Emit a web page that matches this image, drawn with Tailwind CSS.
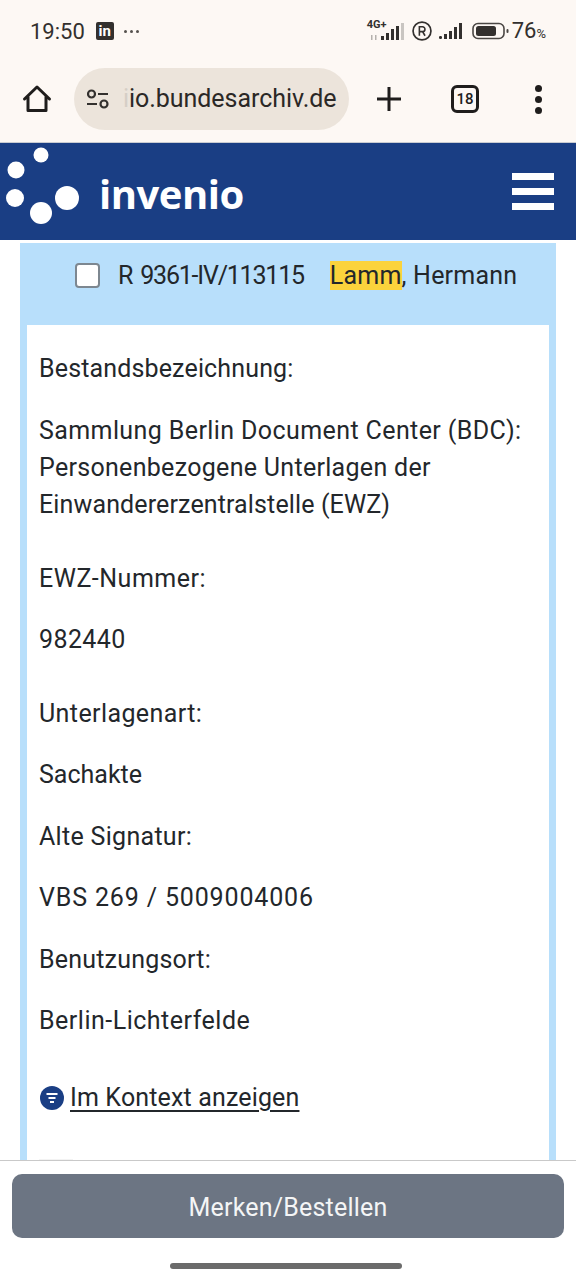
<!DOCTYPE html>
<html lang="de">
<head>
  <meta charset="UTF-8" />
  <meta name="viewport" content="width=device-width, initial-scale=1.0"/>
  <title>invenio</title>
  <script src="https://cdn.jsdelivr.net/npm/@tailwindcss/browser@4"></script>
</head>
<body class="bg-white font-['Roboto',sans-serif] text-[#23272b]">
<div class="w-[576px] h-[1280px] overflow-hidden flex flex-col">

  <!-- Status bar + browser toolbar -->
  <div class="bg-[#fdf8f4] h-[142px] shrink-0">
    <div class="h-[62px] flex items-center pl-[30px] pr-[30px]">
      <span class="text-[22px] text-[#33302e]">19:50</span>
      <span class="ml-[11px] w-[18px] h-[18px] bg-[#33302e] rounded-[2px] text-white text-[15px] font-bold leading-[19px] text-center">in</span>
      <span class="ml-[10px] flex gap-[3px]">
        <i class="w-[3px] h-[3px] rounded-full bg-[#55514e]"></i>
        <i class="w-[3px] h-[3px] rounded-full bg-[#55514e]"></i>
        <i class="w-[3px] h-[3px] rounded-full bg-[#55514e]"></i>
      </span>
      <div class="ml-auto flex items-center">
        <div class="relative w-[37px] h-[24px]">
          <span class="absolute left-0 top-[-1px] text-[11px] font-bold text-[#33302e] leading-[14px]">4G+</span>
          <svg class="absolute left-0 top-0" width="37" height="24" viewBox="0 0 37 24">
            <rect x="14" y="17" width="3" height="4" fill="#33302e"/>
            <rect x="19" y="14" width="3" height="7" fill="#33302e"/>
            <rect x="24" y="10" width="3" height="11" fill="#33302e"/>
            <rect x="29" y="7" width="3" height="14" fill="#33302e"/>
            <rect x="34" y="4" width="3" height="17" fill="#c9c5c1"/>
            <rect x="4" y="16" width="1.5" height="5" fill="#b5b1ad"/>
            <rect x="8" y="16" width="1.5" height="5" fill="#b5b1ad"/>
          </svg>
        </div>
        <svg class="ml-[8px]" width="20" height="20" viewBox="0 0 19 19">
          <circle cx="9.5" cy="9.5" r="8.5" fill="none" stroke="#33302e" stroke-width="1.6"/>
          <path d="M7 14V5.5h3a2.3 2.3 0 0 1 0 4.6H7M10 10l2.4 4" fill="none" stroke="#33302e" stroke-width="1.5"/>
        </svg>
        <svg class="ml-[7px]" width="25" height="18" viewBox="0 0 25 18">
          <rect x="0" y="14" width="3" height="3" rx="1.2" fill="#33302e"/>
          <rect x="5" y="12" width="3" height="5" fill="#33302e"/>
          <rect x="10" y="9" width="3" height="8" fill="#33302e"/>
          <rect x="15" y="5" width="3" height="12" fill="#33302e"/>
          <rect x="20" y="1" width="3" height="16" fill="#33302e"/>
        </svg>
        <svg class="ml-[8px]" width="37" height="18" viewBox="0 0 37 18">
          <rect x="1" y="1.5" width="31" height="15" rx="5" fill="none" stroke="#4a4643" stroke-width="1.6"/>
          <rect x="4" y="4" width="20" height="10" rx="2.5" fill="#33302e"/>
          <rect x="34.5" y="7" width="2" height="4" rx="1" fill="#4a4643"/>
        </svg>
        <span class="ml-[3px] text-[22px] text-[#33302e] leading-none">76<span class="text-[13px]">%</span></span>
      </div>
    </div>
    <div class="h-[74px] flex items-center">
      <svg class="ml-[22px]" width="30" height="30" viewBox="0 0 30 30">
        <path d="M2.5 15 15 3l12.5 12M6 12.5V26.500h18V12.500" fill="none" stroke="#1f1d1c" stroke-width="3" stroke-linejoin="round" stroke-linecap="round"/>
      </svg>
      <div class="ml-[22px] w-[275px] h-[62px] rounded-full bg-[#ece4db] flex items-center overflow-hidden">
        <svg class="ml-[12px] shrink-0" width="24" height="20" viewBox="0 0 24 20">
          <circle cx="5.500" cy="5" r="3.500" fill="none" stroke="#33302e" stroke-width="2.200"/>
          <path d="M12 5h10M1 15h10" stroke="#33302e" stroke-width="2.200"/>
          <circle cx="18" cy="15" r="3.500" fill="none" stroke="#33302e" stroke-width="2.200"/>
        </svg>
        <span class="ml-[13px] text-[25px] whitespace-nowrap text-[#2b2826] tracking-[-0.05px]"><span class="text-[#d5cec6]">i</span>io.bundesarchiv.de</span>
      </div>
      <svg class="ml-[27px]" width="26" height="26" viewBox="0 0 26 26">
        <path d="M13 1v24M1 13h24" stroke="#1f1d1c" stroke-width="3"/>
      </svg>
      <div class="ml-[49px] w-[28px] h-[28px] rounded-[6px] border-[3px] border-[#1f1d1c] text-[15px] font-medium leading-[22px] text-center text-[#1f1d1c]">18</div>
      <div class="ml-[56px] flex flex-col gap-[4px]">
        <i class="w-[7px] h-[7px] rounded-full bg-[#1f1d1c]"></i>
        <i class="w-[7px] h-[7px] rounded-full bg-[#1f1d1c]"></i>
        <i class="w-[7px] h-[7px] rounded-full bg-[#1f1d1c]"></i>
      </div>
    </div>
  </div>

  <!-- invenio header -->
  <header class="h-[98px] shrink-0 bg-[#1a3e84] border-t border-[#c9ccd2] flex items-center relative">
    <svg class="absolute left-0 top-0" width="90" height="90" viewBox="0 0 90 90">
      <circle cx="41" cy="12" r="7.500" fill="#fff"/>
      <circle cx="16" cy="27" r="8.500" fill="#fff"/>
      <circle cx="15" cy="55" r="9" fill="#fff"/>
      <circle cx="41" cy="70" r="11" fill="#fff"/>
      <circle cx="67" cy="55" r="12" fill="#fff"/>
    </svg>
    <span class="ml-[99px] mt-[4px] text-[40px] font-['Open_Sans',sans-serif] font-bold text-white tracking-[-0.5px] leading-none">invenio</span>
    <div class="ml-auto mr-[22px] flex flex-col gap-[8px]">
      <i class="block w-[42px] h-[7px] bg-white"></i>
      <i class="block w-[42px] h-[7px] bg-white"></i>
      <i class="block w-[42px] h-[7px] bg-white"></i>
    </div>
  </header>

  <!-- Result entry -->
  <main class="flex-1 min-h-0 overflow-hidden pt-[3px] px-[20px]">
    <div class="bg-[#b8dffb] px-[7px] h-[1000px]">
      <div class="h-[82px] flex items-start pl-[48px] pt-[16px] text-[25px] leading-[33px]">
        <span class="mt-[4px] w-[25px] h-[25px] bg-white rounded-[4px] border-2 border-[#7d8790] shrink-0"></span>
        <span class="ml-[18px] whitespace-nowrap tracking-[-1.2px] [word-spacing:3px]">R 9361-IV/113115</span>
        <span class="ml-[26px] whitespace-nowrap tracking-[0.2px]"><span class="bg-[#fbd33c]">Lamm</span>, Hermann</span>
      </div>
      <div class="bg-white h-[900px] pl-[12px] pr-[13px] pt-[25px] text-[25px] leading-[37px]">
        <p class="mb-[25px] tracking-[0.15px]">Bestandsbezeichnung:</p>
        <p class="mb-[37px]">
          <span class="block tracking-[0.4px]">Sammlung Berlin Document Center (BDC):</span>
          <span class="block tracking-[0.3px]">Personenbezogene Unterlagen der</span>
          <span class="block tracking-[0.13px]">Einwandererzentralstelle (EWZ)</span>
        </p>
        <p class="mb-[24px] tracking-[0.5px]">EWZ-Nummer:</p>
        <p class="mb-[37px] tracking-[0.4px]">982440</p>
        <p class="mb-[24px] tracking-[0.4px]">Unterlagenart:</p>
        <p class="mb-[25px]">Sachakte</p>
        <p class="mb-[24px] tracking-[0.3px]">Alte Signatur:</p>
        <p class="mb-[25px] tracking-[0.85px]">VBS 269 / 5009004006</p>
        <p class="mb-[24px] tracking-[0.2px]">Benutzungsort:</p>
        <p class="mb-[40px] tracking-[0.5px]">Berlin-Lichterfelde</p>
        <p class="flex items-center">
          <svg width="24" height="24" viewBox="0 0 24 24" class="shrink-0 mt-[1px] ml-[1px]">
            <circle cx="12" cy="12" r="12" fill="#1a3e84"/>
            <path d="M6.500 8h11M8.500 12h7M10 16h4" stroke="#fff" stroke-width="2"/>
          </svg>
          <a href="#" class="ml-[6px] underline underline-offset-[4px] tracking-[0.15px]">Im Kontext anzeigen</a>
        </p>
        <div class="mt-[43px] w-[34px] h-[10px] bg-[#f3f3f3]"></div>
      </div>
    </div>
  </main>

  <!-- Bottom action -->
  <footer class="h-[120px] shrink-0 bg-white border-t border-[#c9c9c9] relative px-[12px] pt-[13px]">
    <button class="w-full h-[64px] rounded-[10px] bg-[#6c7583] text-[#f4f5f6] text-[25px] tracking-[0.2px] pt-[3px]">Merken/Bestellen</button>
    <div class="absolute left-[170px] bottom-[11px] w-[232px] h-[6px] rounded-full bg-[#6b6b6b]"></div>
  </footer>
</div>
</body>
</html>
